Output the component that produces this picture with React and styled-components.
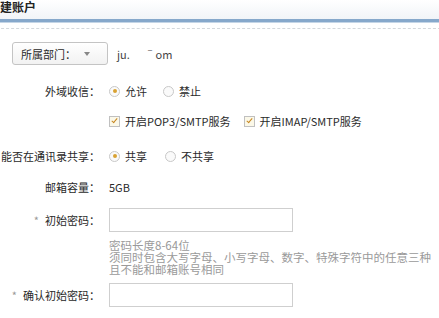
import React from "react";
import styled, { createGlobalStyle } from "styled-components";

const Global = createGlobalStyle`
  html, body {
    margin: 0;
    background: #fff;
    overflow: hidden;
  }
  body {
    font-family: "Noto Sans CJK SC", "Noto Sans", sans-serif;
    color: #333;
  }
`;

const Page = styled.div`
  width: 460px;
  margin-left: -14px;
`;

const Header = styled.div`
  height: 19px;
  background: linear-gradient(#ffffff, #f1f4f8);
  padding-left: 2px;
  font-size: 12px;
  font-weight: 700;
  line-height: 14px;
  color: #222;
  border-bottom: 3px solid #86a8cb;
  box-shadow: 0 1px 0 #c4d5e6;
`;

const Dashed = styled.div`
  margin-top: 6px;
  border-top: 1px dashed #d4d8dc;
`;

const Form = styled.div`
  padding-top: 13px;
`;

const Row = styled.div`
  display: flex;
  align-items: center;
  min-height: ${(p) => p.$h || 20}px;
  margin-top: ${(p) => p.$mt || 0}px;
`;

const Label = styled.div`
  width: 114px;
  flex: none;
  display: flex;
  justify-content: flex-end;
  white-space: nowrap;
  font-size: 11px;
  color: #2a2a2a;
`;

const Star = styled.span`
  color: #999;
  margin-right: 6px;
`;

const Value = styled.div`
  margin-left: 9px;
  display: flex;
  align-items: center;
  font-size: 11px;
  color: #2a2a2a;
`;

const SelectBox = styled.div`
  margin-left: 26px;
  width: 86px;
  height: 21px;
  border: 1px solid #c4c4c4;
  border-radius: 3px;
  background: linear-gradient(#ffffff, #f2f2f2);
  display: flex;
  align-items: center;
  padding-left: 8px;
  box-sizing: content-box;
  font-size: 11px;
  color: #2a2a2a;
`;

const Caret = styled.span`
  margin-left: 8px;
  width: 0;
  height: 0;
  border-left: 3.5px solid transparent;
  border-right: 3.5px solid transparent;
  border-top: 4px solid #888;
`;

const Domain = styled.span`
  margin-left: 9px;
  font-size: 11px;
  color: #444;
`;

const Option = styled.label`
  display: flex;
  align-items: center;
  margin-right: ${(p) => p.$mr || 16}px;
`;

const Radio = styled.span`
  width: 9px;
  height: 9px;
  border-radius: 50%;
  border: 1px solid #c8c8c8;
  background: #fafafa;
  margin-right: 5px;
  display: flex;
  align-items: center;
  justify-content: center;
  &::after {
    content: "";
    width: 4px;
    height: 4px;
    border-radius: 50%;
    background: ${(p) => (p.$on ? "#d9a233" : "transparent")};
  }
`;

const Check = styled.span`
  width: 9px;
  height: 9px;
  border: 1px solid #c0c0c0;
  background: #fbf8e8;
  margin-right: 5px;
  position: relative;
  &::after {
    content: "";
    position: absolute;
    left: 3px;
    top: 0px;
    width: 2px;
    height: 5px;
    border-right: 1.5px solid #c7861f;
    border-bottom: 1.5px solid #c7861f;
    transform: rotate(40deg);
  }
`;

const Input = styled.div`
  width: 182px;
  height: 22px;
  border: 1px solid #cfcfcf;
  background: #fff;
`;

const Hint = styled.div`
  margin-left: 123px;
  margin-top: 7px;
  font-size: 11.5px;
  line-height: 12px;
  color: #9a9a9a;
`;

export default function App() {
  return (
    <>
      <Global />
      <Page>
        <Header>新建账户</Header>
        <Dashed />
        <Form>
          <Row $h={23}>
            <SelectBox>
              所属部门：<Caret />
            </SelectBox>
            <Domain>ju.&nbsp;&nbsp;&nbsp;&nbsp;&nbsp;&nbsp;ˉom</Domain>
          </Row>
          <Row $mt={16}>
            <Label>外域收信：</Label>
            <Value>
              <Option>
                <Radio $on />允许
              </Option>
              <Option>
                <Radio />禁止
              </Option>
            </Value>
          </Row>
          <Row $mt={10}>
            <Label />
            <Value>
              <Option $mr={13}>
                <Check />开启POP3/SMTP服务
              </Option>
              <Option>
                <Check />开启IMAP/SMTP服务
              </Option>
            </Value>
          </Row>
          <Row $mt={15}>
            <Label>能否在通讯录共享：</Label>
            <Value>
              <Option $mr={18}>
                <Radio $on />共享
              </Option>
              <Option>
                <Radio />不共享
              </Option>
            </Value>
          </Row>
          <Row $mt={11}>
            <Label>邮箱容量：</Label>
            <Value>5GB</Value>
          </Row>
          <Row $mt={11} $h={24}>
            <Label>
              <Star>*</Star>初始密码：
            </Label>
            <Value>
              <Input />
            </Value>
          </Row>
          <Hint>
            密码长度8-64位
            <br />
            须同时包含大写字母、小写字母、数字、特殊字符中的任意三种
            <br />
            且不能和邮箱账号相同
          </Hint>
          <Row $mt={8} $h={24}>
            <Label>
              <Star>*</Star>确认初始密码：
            </Label>
            <Value>
              <Input />
            </Value>
          </Row>
        </Form>
      </Page>
    </>
  );
}
